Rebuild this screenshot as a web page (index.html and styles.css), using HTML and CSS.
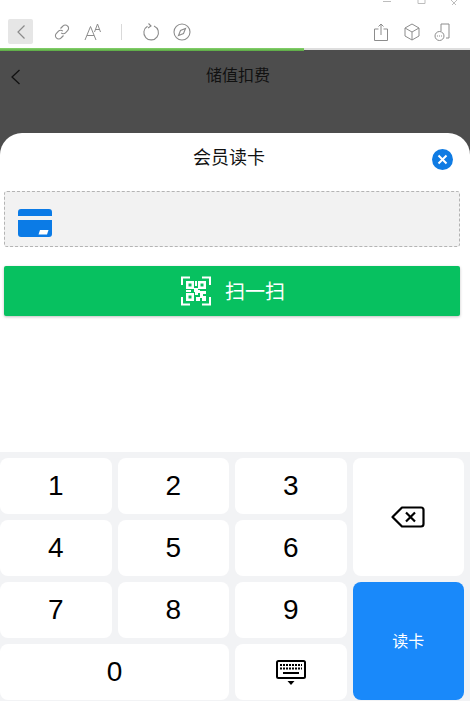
FILE: index.html
```html
<!DOCTYPE html>
<html lang="zh">
<head>
<meta charset="utf-8">
<title>会员读卡</title>
<link rel="stylesheet" href="styles.css">
</head>
<body>
<div class="app">
  <div class="winbar">
    <svg class="win" viewBox="0 0 80 5" width="80" height="5"><path d="M0 1.500h8M35 0v3.500h7V0M68 0l3 3 3-3M71 3l-3 3M71 3l3 3" fill="none" stroke="#bdbdbd"/></svg>
  </div>
  <div class="toolbar">
    <div class="tools">
      <span class="back-btn"><svg width="10" height="16" viewBox="0 0 10 16"><path d="M8.500 1.500 2 8l6.500 6.500" fill="none" stroke="#8a8a8a" stroke-width="1.200"/></svg></span>
      <svg class="ic link" width="18" height="18" viewBox="0 0 18 18"><g fill="none" stroke="#8c8c8c" stroke-width="1.100"><path d="M7.500 5.500 10 3a3 3 0 0 1 4.500 0 3 3 0 0 1 .3 4.300L12.500 9.800a3 3 0 0 1-4.300.1"/><path d="M10.500 12.500 8 15a3 3 0 0 1-4.500 0 3 3 0 0 1-.3-4.300l2.300-2.500a3 3 0 0 1 4.300-.1"/></g></svg>
      <svg class="ic aa" width="18" height="18" viewBox="0 0 18 18"><g fill="none" stroke="#8c8c8c" stroke-width="1"><path d="M1 17 6.500 3.500 12 17M3 12.500h7"/><path d="M10.500 9 13.500 1l3 8M11.500 6.500h4"/></g></svg>
      <span class="sep"></span>
      <svg class="ic reload" width="18" height="18" viewBox="0 0 18 18"><g fill="none" stroke="#8c8c8c" stroke-width="1.100"><path d="M5.500 3.300a7.300 7.300 0 1 0 6.500-.4"/><path d="M6.500 0.500 9 3 6 5"/></g></svg>
      <svg class="ic compass" width="18" height="18" viewBox="0 0 18 18"><g fill="none" stroke="#8c8c8c" stroke-width="1.100"><circle cx="9" cy="9" r="8"/><path d="M12.500 5.500 10.500 10.500 5.500 12.500 7.500 7.500Z"/></g></svg>
    </div>
    <div class="tools">
      <svg class="ic" width="14" height="18" viewBox="0 0 14 18"><g fill="none" stroke="#8c8c8c" stroke-width="1"><path d="M4.500 6H.500v11.500h13V6h-4"/><path d="M7 12V1M4.500 3.500 7 1l2.500 2.500"/></g></svg>
      <svg class="ic cube" width="16" height="18" viewBox="0 0 16 18"><g fill="none" stroke="#8c8c8c" stroke-width="1"><path d="M8 1 15 5v8l-7 4-7-4V5Z"/><path d="M1 5l7 4 7-4M8 9v8"/></g></svg>
      <svg class="ic mini" width="16" height="18" viewBox="0 0 16 18"><g fill="none" stroke="#8c8c8c" stroke-width="1"><path d="M7 8V1h8v14h-3"/><circle cx="5.500" cy="13" r="4.500"/></g><path d="M3 13h1M5 13h1M7 13h1" stroke="#8c8c8c"/></svg>
    </div>
  </div>
  <div class="progress"><div class="progress-fill"></div></div>
  <div class="stage">
    <div class="header">
      <svg class="hback" width="11" height="16" viewBox="0 0 11 16"><path d="M9.500 1 2 8l7.500 7" fill="none" stroke="#111" stroke-width="1.300"/></svg>
      <span class="htitle">储值扣费</span>
    </div>
    <div class="sheet">
      <div class="sheet-title">会员读卡</div>
      <span class="close"><svg width="11" height="11" viewBox="0 0 11 11"><path d="M1.500 1.500l8 8M9.500 1.500l-8 8" stroke="#fff" stroke-width="2" fill="none"/></svg></span>
      <div class="card-field">
        <svg width="34" height="28" viewBox="0 0 34 28"><path d="M3 0h28a3 3 0 0 1 3 3v4H0V3a3 3 0 0 1 3-3ZM0 11h34v14a3 3 0 0 1-3 3H3a3 3 0 0 1-3-3Z" fill="#0b7be6"/><path d="M22 21h8.500l-1.500 4.500h-8.500Z" fill="#fff"/></svg>
      </div>
      <div class="scan-btn">
        <svg width="30" height="30" viewBox="0 0 30 30"><path d="M1 9V1.500h8M21 1.500h8V9M1 21v7.500h8M29 21v7.500h-8" fill="none" stroke="#fff" stroke-width="2"/><path d="M5 5h8v8H5zM7.500 7.500v3h3v-3zM17 5h8v8h-8zM19.500 7.500v3h3v-3zM5 17h8v8H5zM7.500 19.500v3h3v-3zM13 12h4v2h2v3h-2v2h-3v-3h-1zM19 15h6v3h-3v2h3v5h-4v-3h-2v3h-4v-4h4zM14 5h2v5h-2zM5 14h5v2H5z" fill="#fff" fill-rule="evenodd"/></svg>
        <span class="scan-text">扫一扫</span>
      </div>
    </div>
  </div>
  <div class="keypad">
    <div class="key">1</div>
    <div class="key">2</div>
    <div class="key">3</div>
    <div class="key del">
      <svg width="34" height="22" viewBox="0 0 34 22"><path d="M11 1.500h19a2.500 2.500 0 0 1 2.500 2.500v14a2.500 2.500 0 0 1-2.500 2.500H11L1.500 11Z" fill="none" stroke="#000" stroke-width="2.200" stroke-linejoin="round"/><path d="M15 6.500l9 9M24 6.500l-9 9" stroke="#000" stroke-width="2.200" fill="none"/></svg>
    </div>
    <div class="key">4</div>
    <div class="key">5</div>
    <div class="key">6</div>
    <div class="key">7</div>
    <div class="key">8</div>
    <div class="key">9</div>
    <div class="key read"><span class="read-text">读卡</span></div>
    <div class="key zero">0</div>
    <div class="key">
      <svg width="30" height="25" viewBox="0 0 30 25"><rect x="1" y="1" width="28" height="17" rx="1.500" fill="none" stroke="#000" stroke-width="2"/><path d="M4 5h22M4 8.500h22" stroke="#000" stroke-width="2" stroke-dasharray="2 1" fill="none"/><path d="M7 13h16" stroke="#000" stroke-width="2" fill="none"/><path d="M11.500 21h7L15 25Z" fill="#000"/></svg>
    </div>
  </div>
</div>
</body>
</html>
```

FILE: styles.css
```css
* { box-sizing: border-box; }
html, body { margin: 0; padding: 0; }
body { width: 470px; height: 701px; overflow: hidden; background: #fff; font-family: "Noto Sans CJK SC", "Liberation Sans", sans-serif; }
.app { display: flex; flex-direction: column; height: 701px; }
.winbar { height: 5px; display: flex; justify-content: flex-end; padding-right: 7px; }
.win { display: block; }
.toolbar { height: 43px; display: flex; justify-content: space-between; align-items: center; padding: 10px 20px 0 8px; }
.tools { display: flex; align-items: center; }
.back-btn { width: 25px; height: 25px; background: #e6e6e6; border-radius: 2px; display: flex; align-items: center; justify-content: center; margin-right: 20px; }
.ic { display: block; }
.aa { margin-left: 13px; }
.sep { width: 1px; height: 16px; background: #d9d9d9; margin: 0 20px 0 19px; }
.compass { margin-left: 13px; }
.cube { margin-left: 16px; }
.mini { margin-left: 14px; }
.progress { height: 2px; background: #dedede; position: relative; }
.progress-fill { width: 304px; height: 3px; background: linear-gradient(#86d36c 0, #5aa844 100%); position: relative; z-index: 1; }
.stage { flex: 1; background: #4d4d4d; display: flex; flex-direction: column; min-height: 0; }
.header { height: 83px; display: flex; justify-content: center; padding: 13px 0 0 6px; position: relative; font-size: 16px; color: #111; line-height: 23px; }
.hback { position: absolute; left: 10px; top: 19px; }
.sheet { flex: 1; background: #fff; border-radius: 22px 22px 0 0; position: relative; padding: 0 10px 0 4px; }
.sheet-title { text-align: center; font-size: 18px; line-height: 26px; padding: 10px 6px 0 0; height: 58px; color: #111; }
.close { position: absolute; left: 432px; top: 16px; width: 21px; height: 21px; border-radius: 50%; background: #0f7be3; display: flex; align-items: center; justify-content: center; }
.card-field { height: 56px; border: 1px dashed #b4b4b4; border-radius: 3px; background: #f2f2f2; display: flex; align-items: center; padding: 7px 0 0 13px; }
.scan-btn { height: 50px; margin-top: 19px; background: #07c160; border-radius: 2px; box-shadow: 0 1px 3px rgba(0,0,0,.25); display: flex; align-items: center; justify-content: center; gap: 14px; color: #fff; font-size: 20px; padding-left: 2px; }
.scan-text { padding-bottom: 2px; }
.keypad { height: 249px; background: #f2f3f5; padding: 6px 6px 1px 0; display: grid; grid-template-columns: repeat(4, 1fr); grid-template-rows: repeat(4, 56px); gap: 6px; font-family: "Liberation Sans", Arial, sans-serif; }
.key { background: #fff; border-radius: 8px; display: flex; align-items: center; justify-content: center; font-size: 28px; color: #000; }
.del { grid-column: 4; grid-row: 1 / span 2; }
.read { grid-column: 4; grid-row: 3 / span 2; background: #1989fa; color: #fff; font-size: 16px; font-family: "Noto Sans CJK SC", sans-serif; }
.read-text { padding-bottom: 2px; }
.zero { grid-column: 1 / span 2; }
```
